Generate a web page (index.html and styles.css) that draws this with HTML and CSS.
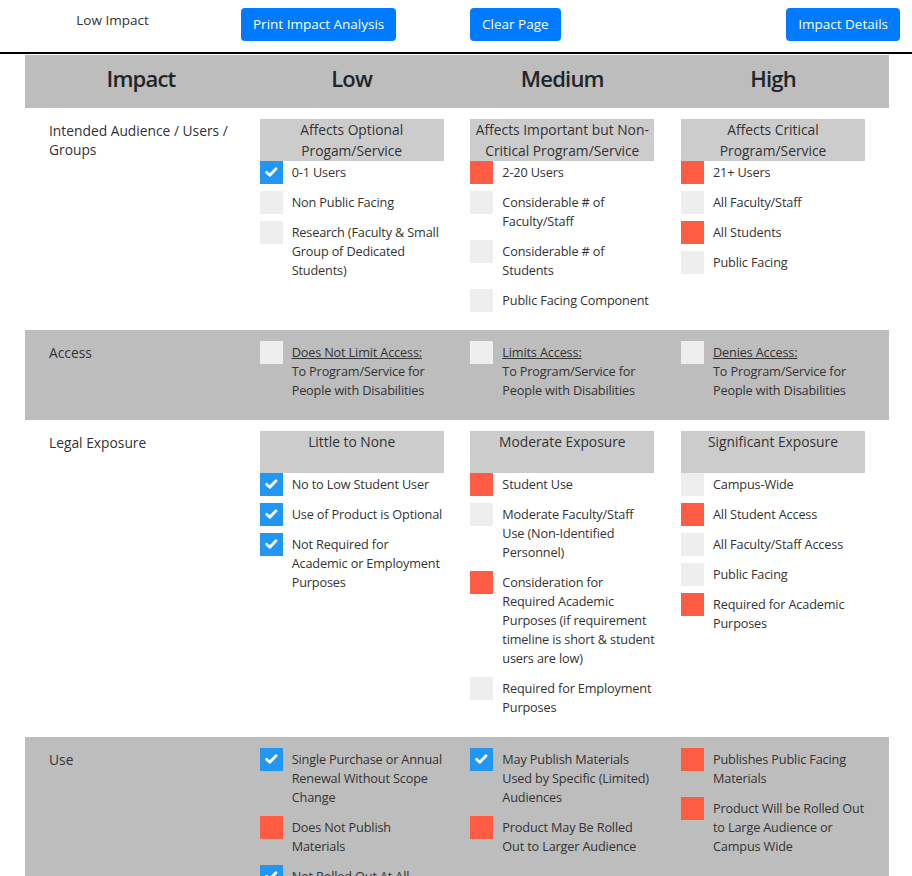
FILE: index.html
```html
<!DOCTYPE html>
<html lang="en">
<head>
<meta charset="utf-8">
<title>Impact Analysis</title>
<link rel="stylesheet" href="styles.css">
</head>
<body>
<header class="toolbar">
  <div class="toolbar-cell toolbar-cell--center"><span class="impact-result">Low Impact</span></div>
  <div class="toolbar-cell"><button class="btn" type="button">Print Impact Analysis</button></div>
  <div class="toolbar-cell"><button class="btn" type="button">Clear Page</button></div>
  <div class="toolbar-cell toolbar-cell--end"><button class="btn" type="button">Impact Details</button></div>
</header>

<main class="matrix">
  <div class="matrix-row matrix-head">
    <div>Impact</div>
    <div>Low</div>
    <div>Medium</div>
    <div>High</div>
  </div>

  <section class="matrix-row">
    <div class="row-label">Intended Audience / Users /<br>Groups</div>
    <div class="level">
      <div class="level-title">Affects Optional<br>Progam/Service</div>
      <ul class="options">
        <li class="option"><span class="box box--yes"><svg viewBox="0 0 23 23" width="23" height="23"><path d="M6.6 11.2l3.2 3.1 6.2-6.6" fill="none" stroke="#fff" stroke-width="2.8" stroke-linecap="round" stroke-linejoin="round"/></svg></span><span class="option-text">0-1 Users</span></li>
        <li class="option"><span class="box"></span><span class="option-text">Non Public Facing</span></li>
        <li class="option"><span class="box"></span><span class="option-text">Research (Faculty &amp; Small<br>Group of Dedicated<br>Students)</span></li>
      </ul>
    </div>
    <div class="level">
      <div class="level-title">Affects Important but Non-<br>Critical Program/Service</div>
      <ul class="options">
        <li class="option"><span class="box box--no"></span><span class="option-text">2-20 Users</span></li>
        <li class="option"><span class="box"></span><span class="option-text">Considerable # of<br>Faculty/Staff</span></li>
        <li class="option"><span class="box"></span><span class="option-text">Considerable # of<br>Students</span></li>
        <li class="option"><span class="box"></span><span class="option-text">Public Facing Component</span></li>
      </ul>
    </div>
    <div class="level">
      <div class="level-title">Affects Critical<br>Program/Service</div>
      <ul class="options">
        <li class="option"><span class="box box--no"></span><span class="option-text">21+ Users</span></li>
        <li class="option"><span class="box"></span><span class="option-text">All Faculty/Staff</span></li>
        <li class="option"><span class="box box--no"></span><span class="option-text">All Students</span></li>
        <li class="option"><span class="box"></span><span class="option-text">Public Facing</span></li>
      </ul>
    </div>
  </section>

  <section class="matrix-row matrix-row--shaded">
    <div class="row-label">Access</div>
    <div class="level">
      <ul class="options">
        <li class="option"><span class="box"></span><span class="option-text"><u>Does Not Limit Access:</u><br>To Program/Service for<br>People with Disabilities</span></li>
      </ul>
    </div>
    <div class="level">
      <ul class="options">
        <li class="option"><span class="box"></span><span class="option-text"><u>Limits Access:</u><br>To Program/Service for<br>People with Disabilities</span></li>
      </ul>
    </div>
    <div class="level">
      <ul class="options">
        <li class="option"><span class="box"></span><span class="option-text"><u>Denies Access:</u><br>To Program/Service for<br>People with Disabilities</span></li>
      </ul>
    </div>
  </section>

  <section class="matrix-row">
    <div class="row-label">Legal Exposure</div>
    <div class="level">
      <div class="level-title">Little to None</div>
      <ul class="options">
        <li class="option"><span class="box box--yes"><svg viewBox="0 0 23 23" width="23" height="23"><path d="M6.6 11.2l3.2 3.1 6.2-6.6" fill="none" stroke="#fff" stroke-width="2.8" stroke-linecap="round" stroke-linejoin="round"/></svg></span><span class="option-text">No to Low Student User</span></li>
        <li class="option"><span class="box box--yes"><svg viewBox="0 0 23 23" width="23" height="23"><path d="M6.6 11.2l3.2 3.1 6.2-6.6" fill="none" stroke="#fff" stroke-width="2.8" stroke-linecap="round" stroke-linejoin="round"/></svg></span><span class="option-text">Use of Product is Optional</span></li>
        <li class="option"><span class="box box--yes"><svg viewBox="0 0 23 23" width="23" height="23"><path d="M6.6 11.2l3.2 3.1 6.2-6.6" fill="none" stroke="#fff" stroke-width="2.8" stroke-linecap="round" stroke-linejoin="round"/></svg></span><span class="option-text">Not Required for<br>Academic or Employment<br>Purposes</span></li>
      </ul>
    </div>
    <div class="level">
      <div class="level-title">Moderate Exposure</div>
      <ul class="options">
        <li class="option"><span class="box box--no"></span><span class="option-text">Student Use</span></li>
        <li class="option"><span class="box"></span><span class="option-text">Moderate Faculty/Staff<br>Use (Non-Identified<br>Personnel)</span></li>
        <li class="option"><span class="box box--no"></span><span class="option-text">Consideration for<br>Required Academic<br>Purposes (if requirement<br>timeline is short &amp; student<br>users are low)</span></li>
        <li class="option"><span class="box"></span><span class="option-text">Required for Employment<br>Purposes</span></li>
      </ul>
    </div>
    <div class="level">
      <div class="level-title">Significant Exposure</div>
      <ul class="options">
        <li class="option"><span class="box"></span><span class="option-text">Campus-Wide</span></li>
        <li class="option"><span class="box box--no"></span><span class="option-text">All Student Access</span></li>
        <li class="option"><span class="box"></span><span class="option-text">All Faculty/Staff Access</span></li>
        <li class="option"><span class="box"></span><span class="option-text">Public Facing</span></li>
        <li class="option"><span class="box box--no"></span><span class="option-text">Required for Academic<br>Purposes</span></li>
      </ul>
    </div>
  </section>

  <section class="matrix-row matrix-row--shaded">
    <div class="row-label">Use</div>
    <div class="level">
      <ul class="options">
        <li class="option"><span class="box box--yes"><svg viewBox="0 0 23 23" width="23" height="23"><path d="M6.6 11.2l3.2 3.1 6.2-6.6" fill="none" stroke="#fff" stroke-width="2.8" stroke-linecap="round" stroke-linejoin="round"/></svg></span><span class="option-text">Single Purchase or Annual<br>Renewal Without Scope<br>Change</span></li>
        <li class="option"><span class="box box--no"></span><span class="option-text">Does Not Publish<br>Materials</span></li>
        <li class="option"><span class="box box--yes"><svg viewBox="0 0 23 23" width="23" height="23"><path d="M6.6 11.2l3.2 3.1 6.2-6.6" fill="none" stroke="#fff" stroke-width="2.8" stroke-linecap="round" stroke-linejoin="round"/></svg></span><span class="option-text">Not Rolled Out At All</span></li>
      </ul>
    </div>
    <div class="level">
      <ul class="options">
        <li class="option"><span class="box box--yes"><svg viewBox="0 0 23 23" width="23" height="23"><path d="M6.6 11.2l3.2 3.1 6.2-6.6" fill="none" stroke="#fff" stroke-width="2.8" stroke-linecap="round" stroke-linejoin="round"/></svg></span><span class="option-text">May Publish Materials<br>Used by Specific (Limited)<br>Audiences</span></li>
        <li class="option"><span class="box box--no"></span><span class="option-text">Product May Be Rolled<br>Out to Larger Audience</span></li>
      </ul>
    </div>
    <div class="level">
      <ul class="options">
        <li class="option"><span class="box box--no"></span><span class="option-text">Publishes Public Facing<br>Materials</span></li>
        <li class="option"><span class="box box--no"></span><span class="option-text">Product Will be Rolled Out<br>to Large Audience or<br>Campus Wide</span></li>
      </ul>
    </div>
  </section>
</main>
</body>
</html>
```

FILE: styles.css
```css
* {
  box-sizing: border-box;
}

body {
  margin: 0;
  font-family: "Open Sans", "Noto Sans", sans-serif;
  color: #333;
  background: #fff;
}

/* top toolbar */
.toolbar {
  display: grid;
  grid-template-columns: repeat(4, minmax(0, 1fr));
  column-gap: 28px;
  height: 54px;
  padding: 8px 12px 0 12px;
  border-bottom: 2px solid #000;
}

.toolbar-cell--center {
  text-align: center;
}

.toolbar-cell--end {
  text-align: right;
}

.impact-result {
  display: inline-block;
  font-size: 13.5px;
  line-height: 21px;
  color: #333;
}

.btn {
  font-family: inherit;
  font-size: 13.5px;
  line-height: 21px;
  padding: 6px 12px;
  border: 0;
  border-radius: 4px;
  background: #007bff;
  color: #fff;
  cursor: pointer;
}

/* impact matrix */
.matrix {
  margin: 1px 23px 0 25px;
}

.matrix-row {
  display: grid;
  grid-template-columns: repeat(4, minmax(0, 1fr));
  column-gap: 26.67px;
  padding: 11px 24px;
}

.matrix-row--shaded {
  background: #bdbdbd;
}

.matrix-head {
  height: 53px;
  padding: 0 24px 8px;
  align-items: center;
  background: #bdbdbd;
  font-size: 22px;
  font-weight: 600;
  letter-spacing: -0.8px;
  color: #212529;
  text-align: center;
}

.row-label {
  font-size: 13.8px;
  line-height: 19px;
  padding-top: 2px;
  white-space: nowrap;
}

.level-title {
  min-height: 42px;
  background: #cccccc;
  text-align: center;
  font-size: 13.8px;
  line-height: 21px;
  white-space: nowrap;
}

.options {
  list-style: none;
  margin: 0;
  padding: 0;
}

.option {
  display: flex;
  align-items: flex-start;
  gap: 9px;
  margin-bottom: 7px;
}

.box {
  flex: none;
  width: 23px;
  height: 23px;
  background: #eeeeee;
}

.box svg {
  display: block;
}

.box--yes {
  background: #2196f3;
}

.box--no {
  background: #ff5c43;
}

.option-text {
  font-size: 12.7px;
  line-height: 19px;
  letter-spacing: -0.15px;
  padding: 2px 0;
  white-space: nowrap;
}
```
